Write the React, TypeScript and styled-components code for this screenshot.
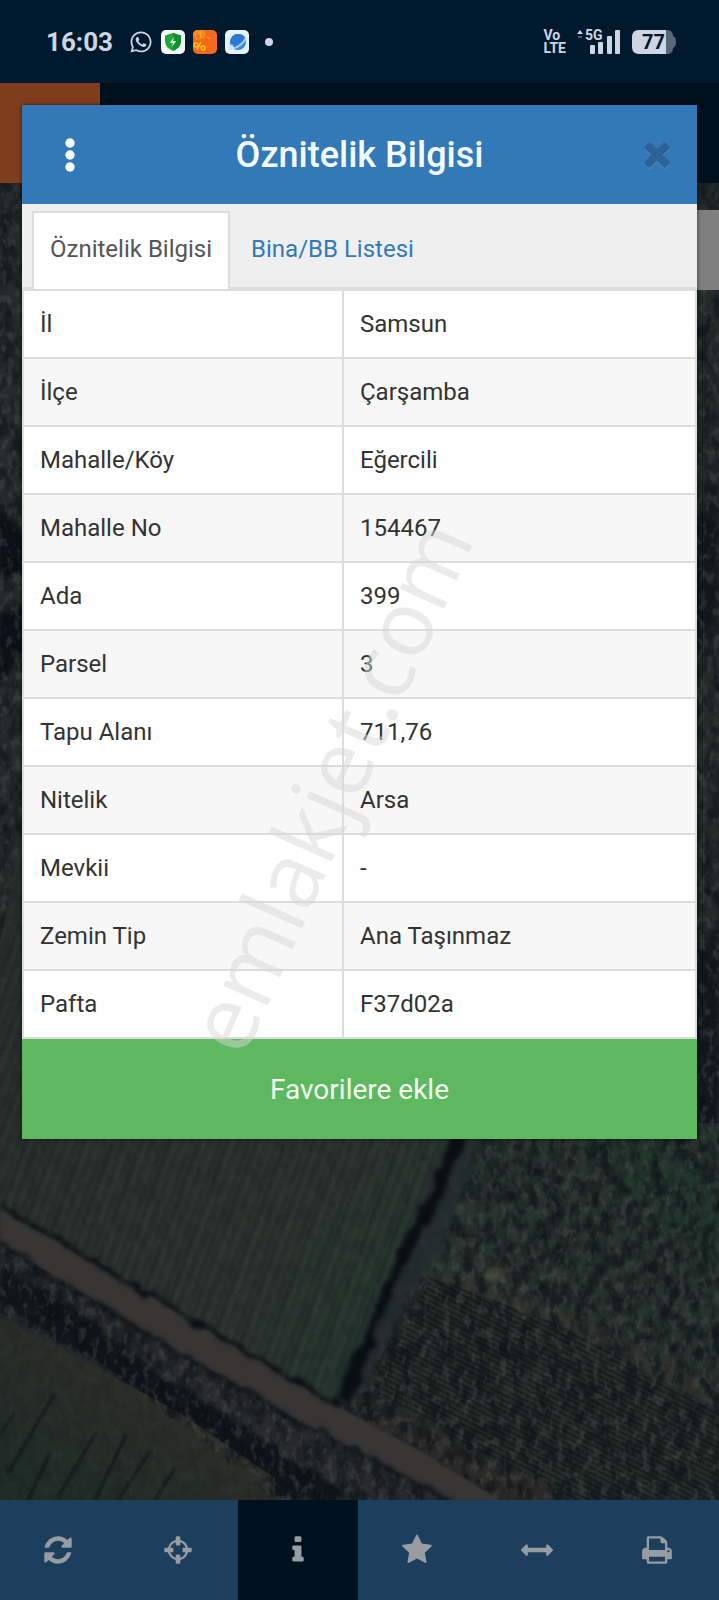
import React, { useState } from 'react';

import styled, { createGlobalStyle } from 'styled-components';
import { FaWhatsapp } from 'react-icons/fa';


const ROWS = [
  { label: 'İl', value: 'Samsun' },
  { label: 'İlçe', value: 'Çarşamba' },
  { label: 'Mahalle/Köy', value: 'Eğercili' },
  { label: 'Mahalle No', value: '154467' },
  { label: 'Ada', value: '399' },
  { label: 'Parsel', value: '3' },
  { label: 'Tapu Alanı', value: '711,76' },
  { label: 'Nitelik', value: 'Arsa' },
  { label: 'Mevkii', value: '-' },
  { label: 'Zemin Tip', value: 'Ana Taşınmaz' },
  { label: 'Pafta', value: 'F37d02a' },
];

const TABS = ['Öznitelik Bilgisi', 'Bina/BB Listesi'];

// glyphs are on a 1792 x 1792 box
const TOOLS = [
  {
    name: 'Yenile',
    path: 'M1639 1056q0 5-1 7-64 268-268 434.5t-478 166.5q-146 0-282.5-55t-243.5-157l-129 129q-19 19-45 19t-45-19-19-45v-448q0-26 19-45t45-19h448q26 0 45 19t19 45-19 45l-137 137q71 66 161 102t187 36q134 0 250-65t186-179q11-17 53-117 8-23 30-23h192q13 0 22.5 9.5t9.5 22.5zm25-800v448q0 26-19 45t-45 19h-448q-26 0-45-19t-19-45 19-45l138-138q-148-137-349-137-134 0-250 65t-186 179q-11 17-53 117-8 23-30 23h-199q-13 0-22.5-9.5t-9.5-22.5v-7q65-268 270-434.5t480-166.5q146 0 284 55.5t245 156.5l130-129q19-19 45-19t45 19 19 45z',
  },
  {
    name: 'Konum',
    path: 'M1325 1024h-109q-26 0-45-19t-19-45v-128q0-26 19-45t45-19h109q-32-108-112.5-188.5t-188.5-112.5v109q0 26-19 45t-45 19h-128q-26 0-45-19t-19-45v-109q-108 32-188.5 112.5t-112.5 188.5h109q26 0 45 19t19 45v128q0 26-19 45t-45 19h-109q32 108 112.5 188.5t188.5 112.5v-109q0-26 19-45t45-19h128q26 0 45 19t19 45v109q108-32 188.5-112.5t112.5-188.5zm339-192v128q0 26-19 45t-45 19h-143q-37 161-154.5 278.5t-278.5 154.5v143q0 26-19 45t-45 19h-128q-26 0-45-19t-19-45v-143q-161-37-278.5-154.5t-154.5-278.5h-143q-26 0-45-19t-19-45v-128q0-26 19-45t45-19h143q37-161 154.5-278.5t278.5-154.5v-143q0-26 19-45t45-19h128q26 0 45 19t19 45v143q161 37 278.5 154.5t154.5 278.5h143q26 0 45 19t19 45z',
  },
  {
    name: 'Bilgi',
    path: 'M1216 1344v128q0 26-19 45t-45 19h-512q-26 0-45-19t-19-45v-128q0-26 19-45t45-19h64v-384h-64q-26 0-45-19t-19-45v-128q0-26 19-45t45-19h384q26 0 45 19t19 45v576h64q26 0 45 19t19 45zm-128-1152v192q0 26-19 45t-45 19h-256q-26 0-45-19t-19-45v-192q0-26 19-45t45-19h256q26 0 45 19t19 45z',
  },
  {
    name: 'Favoriler',
    path: 'M1728 647q0 22-26 48l-363 354 86 500q1 7 1 20 0 21-10.5 35.5t-30.5 14.5q-19 0-40-12l-449-236-449 236q-22 12-40 12-21 0-31.5-14.5t-10.5-35.5q0-6 2-20l86-500-364-354q-25-27-25-48 0-37 56-46l502-73 225-455q19-41 49-41t49 41l225 455 502 73q56 9 56 46z',
  },
  {
    name: 'Ölçüm',
    path: 'M1792 896q0 26-19 45l-256 256q-19 19-45 19t-45-19-19-45v-128h-1024v128q0 26-19 45t-45 19-45-19l-256-256q-19-19-19-45t19-45l256-256q19-19 45-19t45 19 19 45v128h1024v-128q0-26 19-45t45-19 45 19l256 256q19 19 19 45z',
  },
  {
    name: 'Yazdır',
    path: 'M448 1536h896v-256h-896v256zm0-640h896v-384h-160q-40 0-68-28t-28-68v-160h-640v640zm1152 64q0-26-19-45t-45-19-45 19-19 45 19 45 45 19 45-19 19-45zm128 0v416q0 13-9.5 22.5t-22.5 9.5h-224v160q0 40-28 68t-68 28h-960q-40 0-68-28t-28-68v-160h-224q-13 0-22.5-9.5t-9.5-22.5v-416q0-79 56.5-135.5t135.5-56.5h64v-544q0-40 28-68t68-28h672q40 0 88 20t76 48l152 152q28 28 48 76t20 88v256h64q79 0 135.5 56.5t56.5 135.5z',
  },
];

const CLOSE_PATH = 'M1490 1322q0 40-28 68l-136 136q-28 28-68 28t-68-28l-294-294-294 294q-28 28-68 28t-68-28l-136-136q-28-28-28-68t28-68l294-294-294-294q-28-28-28-68t28-68l136-136q28-28 68-28t68 28l294 294 294-294q28-28 68-28t68 28l136 136q28 28 28 68t-28 68l-294 294 294 294q28 28 28 68z';

const ShieldIcon = () => (
  <svg width="24" height="24" viewBox="0 0 24 24">
    <rect width="24" height="24" rx="5" fill="#f3faf6" />
    <path d="M12 3 L20 5.500 V11 Q20 17.500 12 21 Q4 17.500 4 11 V5.500 Z" fill="#1fa83a" />
    <path d="M12 3 L20 5.500 V11 Q20 17.500 12 21 Z" fill="#149030" />
    <path d="M13 7 L9 13 H12 L11 17 L15 11 H12 Z" fill="#e9fff0" />
  </svg>
);

const PromoIcon = () => (
  <svg width="24" height="24" viewBox="0 0 24 24">
    <rect width="24" height="24" rx="5" fill="#f4691b" />
    <path d="M0 6 Q5 2 8 7 T13 4 L11 0 H5 Q0 0 0 5 Z" fill="#f98a1e" />
    <path d="M2 4 L4 10 M8 2 L7 9 M14 7 L17 9" stroke="#fbb53a" strokeWidth="1" />
    <g fill="none" stroke="#fbc21d" strokeWidth="1.500">
      <circle cx="3" cy="15" r="2" />
      <circle cx="10" cy="18" r="2" />
      <path d="M8 12 L4 20" />
    </g>
  </svg>
);

const BrowserIcon = () => (
  <svg width="24" height="24" viewBox="0 0 24 24">
    <rect width="24" height="24" rx="5" fill="#e6f2fb" />
    <circle cx="13" cy="12" r="8" fill="#3b88da" />
    <path d="M5 13 Q6 4 13 4 Q19 4 20 8 Q14 16 6 16 Z" fill="#2f78cf" />
    <path d="M7 18 Q15 16 20 8 L21 10 Q17 17 9 19 Z" fill="#a5d0f6" />
    <path d="M4 20 Q4 16 7 14 L10 19 Z" fill="#c6e3f9" />
  </svg>
);

const SignalIcon = () => (
  <svg width="46" height="36" viewBox="0 -5 46 36">
    <path d="M1 5 L4 1 L7 5 Z" fill="#cdd6e2" />
    <path d="M2 8 H6" stroke="#4a5a6c" strokeWidth="2" />
    <g fill="#cdd6e2">
      <rect x="14" y="16" width="5" height="9" rx="1" />
      <rect x="22" y="13" width="5" height="12" rx="1" />
      <rect x="31" y="7" width="5" height="18" rx="1" />
      <rect x="39" y="1" width="5" height="24" rx="1" />
    </g>
    <text x="9" y="11" fontFamily="Roboto, sans-serif" fontSize="14" fontWeight="700" fill="#cdd6e2">5G</text>
  </svg>
);

const BatteryIcon = () => (
  <svg width="44" height="24" viewBox="0 0 44 24">
    <path d="M34 0 H35 Q41 0 41 6 Q44 7 44 12 Q44 17 41 18 Q41 24 35 24 H34 Z" fill="#58677a" />
    <path d="M7 0 H34 V24 H7 Q0 24 0 17 V7 Q0 0 7 0 Z" fill="#cdd6e2" />
    <text x="10" y="19" fontFamily="Roboto, sans-serif" fontSize="20" fontWeight="700" fill="#04162a">77</text>
  </svg>
);

// darkened aerial photo of the fields
const Aerial = () => (
  <StyledAerial viewBox="0 0 719 1317" preserveAspectRatio="xMidYMax slice" aria-hidden="true">
    <defs>
      <pattern id="furrow" width="27" height="60" patternUnits="userSpaceOnUse" patternTransform="rotate(20)">
        <rect x="1" width="1" height="60" fill="#131c1a" opacity=".6" />
        <rect x="6" width="2" height="60" fill="#3a3f3a" opacity=".3" />
        <rect x="11" width="1" height="60" fill="#1a2422" opacity=".5" />
        <rect x="17" width="1" height="60" fill="#3a3f3a" opacity=".3" />
        <rect x="21" width="2" height="60" fill="#19221f" opacity=".4" />
      </pattern>
      <pattern id="rows" width="5" height="5" patternUnits="userSpaceOnUse" patternTransform="rotate(27)">
        <rect width="5" height="2" fill="#101719" opacity=".6" />
      </pattern>
      <pattern id="trees" width="22" height="24" patternUnits="userSpaceOnUse" patternTransform="rotate(28)">
        <ellipse cx="6" cy="6" rx="4" ry="6" fill="#0f1619" opacity=".6" />
        <ellipse cx="17" cy="17" rx="4" ry="6" fill="#121b1b" opacity=".6" />
        <ellipse cx="12" cy="5" rx="2" ry="4" fill="#3b453e" opacity=".5" />
      </pattern>
      <linearGradient id="field" x1="0" y1="0" x2="1" y2="1">
        <stop offset="0" stopColor="#272e2c" />
        <stop offset=".7" stopColor="#2c332f" />
        <stop offset="1" stopColor="#223a30" />
      </linearGradient>
      <linearGradient id="fallow" x1="0" y1="1" x2="1" y2="0">
        <stop offset="0" stopColor="#1d2c26" />
        <stop offset=".6" stopColor="#2c2d29" />
      </linearGradient>
      <filter id="grain" x="0" y="0" width="100%" height="100%" colorInterpolationFilters="sRGB">
        <feTurbulence type="fractalNoise" baseFrequency=".08 .05" numOctaves="4" seed="7" />
        <feColorMatrix values="0 0 0 0 .05  0 0 0 0 .07  0 0 0 0 .09  3 0 0 0 -1.200" />
      </filter>
      <filter id="light" x="0" y="0" width="100%" height="100%" colorInterpolationFilters="sRGB">
        <feTurbulence type="fractalNoise" baseFrequency=".14 .09" numOctaves="3" seed="21" />
        <feColorMatrix values="0 0 0 0 .3  0 0 0 0 .32  0 0 0 0 .32  0 4 0 0 -2" />
      </filter>
      <filter id="rough" x="-10%" y="-10%" width="120%" height="120%" colorInterpolationFilters="sRGB">
        <feTurbulence type="fractalNoise" baseFrequency=".06" numOctaves="3" seed="3" result="noise" />
        <feDisplacementMap in="SourceGraphic" in2="noise" scale="14" xChannelSelector="R" yChannelSelector="G" />
        <feGaussianBlur stdDeviation="2" />
      </filter>
      <filter id="soft">
        <feGaussianBlur stdDeviation="1" />
      </filter>
      <clipPath id="wild">
        <path d="M0 0 H24 V640 L0 760 Z M690 0 H719 V1317 H500 L342 1224 L404 1070 L455 950 H690 Z M0 1060 L138 1144 L284 1230 L450 1317 H275 L115 1190 L0 1130 Z" />
      </clipPath>
    </defs>

    <rect width="719" height="1317" fill="#232a28" />
    <path d="M0 0 H30 V640 L0 700 Z" fill="#252a2a" />
    <path d="M0 700 L40 600 H450 V957 L404 1070 L339 1224 L110 1087 L0 1025 Z" fill="url(#field)" />
    <path d="M0 700 L40 600 H450 V957 L404 1070 L339 1224 L110 1087 L0 1025 Z" fill="url(#furrow)" filter="url(#soft)" />
    <path d="M0 320 L20 350 L40 330 V400 L0 390 Z M0 430 L40 420 V450 L0 500 Z" fill="#0b1118" filter="url(#rough)" />
    <path d="M690 340 L719 310 V430 L690 470 Z M690 780 L719 740 V960 H690 Z" fill="#0d141c" opacity=".7" filter="url(#rough)" />

    {/* orchard */}
    <path d="M460 940 H719 V1224 L431 1094 L400 1080 Z" fill="#29332e" />
    <path d="M470 940 H719 V1224 L480 1080 Z" fill="url(#trees)" filter="url(#rough)" />
    <path d="M560 940 L719 1090 V1000 L640 940 Z" fill="#1c3c2c" opacity=".35" filter="url(#rough)" />
    <path d="M430 1090 Q520 1100 719 1205 V1222 Q540 1120 430 1100 Z" fill="#373330" opacity=".7" filter="url(#rough)" />
    <ellipse cx="497" cy="1090" rx="13" ry="9" fill="#555443" opacity=".6" filter="url(#rough)" />

    {/* ploughed plot */}
    <path d="M431 1094 L560 1142 L719 1230 V1317 H500 L358 1220 Z" fill="#252b27" />
    <path d="M431 1094 L560 1142 L719 1230 V1317 H560 L370 1205 Z" fill="url(#rows)" />
    <path d="M360 1215 L440 1250 L580 1317 H500 L345 1230 Z" fill="#2b2927" filter="url(#rough)" />

    {/* verge and lower plots */}
    <path d="M0 1055 L138 1140 L284 1225 L455 1317 H275 L115 1180 L0 1130 Z" fill="#262a2c" />
    <path d="M0 1085 L70 1122 L160 1190 L250 1248 L330 1300 L350 1317 H280 L240 1276 L100 1182 L0 1120 Z" fill="#0c1119" opacity=".8" filter="url(#rough)" />
    <path d="M0 1134 L80 1176 L180 1230 L275 1295 V1317 H0 Z" fill="url(#fallow)" />
    <path
      d="M54 1212 L8 1290 M50 1270 L28 1317 M96 1250 L56 1317 M126 1252 L95 1317 M150 1268 L118 1317 M175 1285 L155 1317 M14 1230 L0 1252"
      stroke="#0e1715"
      strokeWidth="2"
      filter="url(#soft)"
    />

    <g clipPath="url(#wild)">
      <rect width="719" height="1317" filter="url(#grain)" opacity=".6" />
      <rect width="719" height="1317" filter="url(#light)" opacity=".35" />
    </g>
    <rect width="719" height="1317" filter="url(#grain)" opacity=".15" />
    <rect width="719" height="1317" filter="url(#light)" opacity=".1" />

    {/* hedge */}
    <path d="M446 950 L482 950 L462 1010 L440 1070 L405 1120 L372 1190 L352 1222 L332 1218 L370 1130 L404 1060 Z" fill="#232c2f" opacity=".8" filter="url(#rough)" />
    <path d="M452 950 L468 950 L430 1040 L400 1090 L376 1150 L350 1222 L334 1215 L375 1130 L400 1060 L432 1010 Z" fill="#0a0e14" filter="url(#rough)" />

    {/* road */}
    <path d="M0 1026 L110 1088 L339 1225 L420 1268 L500 1317 H450 L284 1230 L138 1144 L0 1059 Z" fill="#393636" filter="url(#soft)" />
    <path d="M0 1023 L110 1088 L225 1156 L339 1222" fill="none" stroke="#0b0e12" strokeWidth="4" filter="url(#rough)" />
    <path d="M0 1062 L138 1145 L284 1231 L450 1318" fill="none" stroke="#101317" strokeWidth="4" filter="url(#rough)" />
  </StyledAerial>
);

const App = () => {
  const [tab, setTab] = useState(0);
  const [tool, setTool] = useState(2);

  return (
    <>
      <GlobalStyle />
      <StyledScreen>
        <StyledStatusBar>
          <StyledGroup gap={8}>
            <StyledClock>16:03</StyledClock>
            <FaWhatsapp size={24} />
            <ShieldIcon />
            <PromoIcon />
            <BrowserIcon />
            <StyledDot />
          </StyledGroup>
          <StyledGroup gap={10}>
            <StyledVolte>Vo<br />LTE</StyledVolte>
            <SignalIcon />
            <BatteryIcon />
          </StyledGroup>
        </StyledStatusBar>

        <StyledStage>
          <StyledBackdrop>
            <StyledAppBar>
              <div />
            </StyledAppBar>
            <StyledMap>
              <Aerial />
              <StyledMapBox />
            </StyledMap>
            <StyledToolbar>
              {TOOLS.map(({ name, path }, i) => (
                <StyledTool key={name} type="button" aria-label={name} active={i === tool} onClick={() => setTool(i)}>
                  <svg width="32" height="32" viewBox="0 0 1792 1792" fill="currentColor">
                    <path d={path} />
                  </svg>
                </StyledTool>
              ))}
            </StyledToolbar>
          </StyledBackdrop>

          <StyledDialog role="dialog" aria-labelledby="dialog-title">
            <StyledHeader>
              <StyledIconButton type="button" aria-label="Menü">
                <svg width="10" height="34" viewBox="0 0 10 34" fill="#f4fbff">
                  <circle cx="5" cy="5" r="4.700" />
                  <circle cx="5" cy="17" r="4.700" />
                  <circle cx="5" cy="29" r="4.700" />
                </svg>
              </StyledIconButton>
              <h1 id="dialog-title">Öznitelik Bilgisi</h1>
              <StyledIconButton type="button" aria-label="Kapat">
                <svg width="38" height="38" viewBox="0 60 1792 1792">
                  <path d={CLOSE_PATH} fill="#4f8bc0" transform="translate(0 50)" />
                  <path d={CLOSE_PATH} fill="#2d6394" />
                </svg>
              </StyledIconButton>
            </StyledHeader>
            <StyledTabs role="tablist">
              {TABS.map((text, i) => (
                <StyledTab key={text} type="button" role="tab" aria-selected={i === tab} active={i === tab} onClick={() => setTab(i)}>
                  {text}
                </StyledTab>
              ))}
            </StyledTabs>
            <StyledTable>
              <tbody>
                {ROWS.map(({ label, value }) => (
                  <tr key={label}>
                    <th scope="row">{label}</th>
                    <td>{value}</td>
                  </tr>
                ))}
              </tbody>
            </StyledTable>
            <StyledFavorite type="button">Favorilere ekle</StyledFavorite>
          </StyledDialog>
        </StyledStage>
        <StyledWatermark>emlakjet.com</StyledWatermark>
      </StyledScreen>
    </>
  );
};

export default App;

const GlobalStyle = createGlobalStyle`
  * {
    box-sizing: border-box;
  }
  body {
    margin: 0;
    font-family: Roboto, sans-serif;
    background: #00101c;
  }
  button {
    font-family: inherit;
    border: none;
    padding: 0;
    cursor: pointer;
  }
  svg {
    display: block;
  }
`;

const StyledScreen = styled.div`
  position: relative;
  min-height: 100vh;
  display: flex;
  flex-direction: column;
  overflow: hidden;
`;

const StyledStatusBar = styled.header`
  height: 83px;
  padding: 0 43px 0 46px;
  display: flex;
  justify-content: space-between;
  align-items: center;
  color: #cdd6e2;
  background: #01192d;
`;

const StyledGroup = styled.div.withConfig({ shouldForwardProp: p => p !== 'gap' })<{ gap: number }>`
  display: flex;
  align-items: center;
  gap: ${({ gap }) => gap}px;
`;

const StyledClock = styled.span`
  margin-right: 8px;
  font-size: 26px;
  line-height: 28px;
  font-weight: 700;
`;

const StyledDot = styled.i`
  width: 8px;
  height: 8px;
  margin-left: 8px;
  border-radius: 50%;
  background: #cdd6e2;
`;

const StyledVolte = styled.span`
  font-size: 14px;
  line-height: 13px;
  font-weight: 700;
`;

/* backdrop and dialog share one cell */
const StyledStage = styled.div`
  flex: 1;
  display: grid;
  grid-template-columns: minmax(0, 1fr);

  > * {
    grid-area: 1 / 1;
  }
`;

const StyledBackdrop = styled.div`
  display: flex;
  flex-direction: column;
`;

const StyledAppBar = styled.div`
  height: 100px;
  background: #00101c;

  > div {
    width: 100px;
    height: 100%;
    background: #803d1d;
  }
`;

const StyledMap = styled.div`
  position: relative;
  flex: 1;
`;

const StyledAerial = styled.svg`
  position: absolute;
  inset: 0;
  width: 100%;
  height: 100%;
`;

const StyledMapBox = styled.div`
  position: absolute;
  top: 27px;
  right: 0;
  width: 80px;
  height: 80px;
  background: #7f7f7f;
`;

const StyledToolbar = styled.nav`
  height: 100px;
  margin-left: -2px;
  padding-right: 2px;
  display: grid;
  grid-template-columns: repeat(6, 1fr);
  background: #1c3f5d;
`;

const StyledTool = styled.button.withConfig({ shouldForwardProp: p => p !== 'active' })<{ active: boolean }>`
  display: flex;
  justify-content: center;
  align-items: center;
  color: #979ca3;
  background: ${({ active }) => (active ? '#00101c' : 'transparent')};
`;

const StyledDialog = styled.section`
  align-self: start;
  margin: 22px 22px 120px;
  position: relative;
  box-shadow: 0 0 4px rgba(0, 0, 0, .6);
`;

const StyledHeader = styled.div`
  height: 99px;
  padding: 0 12px 0 20px;
  display: grid;
  grid-template-columns: 56px 1fr 56px;
  align-items: center;
  background: #3379b7;

  h1 {
    margin: 0;
    padding-right: 8px;
    font-size: 36px;
    font-weight: 500;
    text-align: center;
    color: #f4fbff;
  }
`;

const StyledIconButton = styled.button`
  height: 56px;
  display: flex;
  justify-content: center;
  align-items: center;
  background: none;
`;

const StyledTabs = styled.div`
  height: 85px;
  padding: 7px 10px 0;
  display: flex;
  background: #efefef;
  border-bottom: 2px solid #ddd;
`;

const StyledTab = styled.button.withConfig({ shouldForwardProp: p => p !== 'active' })<{ active: boolean }>`
  height: 78px;
  padding: 0 16px 4px;
  font-size: 24px;
  color: ${({ active }) => (active ? '#555' : '#337ab7')};
  background: ${({ active }) => (active ? '#fff' : 'transparent')};
  border: 2px solid ${({ active }) => (active ? '#ddd' : 'transparent')};
  border-bottom: none;
  margin-right: 3px;
`;

const StyledTable = styled.table`
  width: 100%;
  border-collapse: collapse;
  table-layout: fixed;
  background: #fff;

  tr {
    height: 68px;
  }
  tr:nth-child(even) {
    background: #f7f7f7;
  }
  th, td {
    padding: 0 16px;
    font-size: 24px;
    font-weight: 400;
    text-align: left;
    color: #333;
    border: 2px solid #ddd;
  }
  th {
    width: 320px;
  }
`;

const StyledFavorite = styled.button`
  width: 100%;
  height: 100px;
  font-size: 28px;
  color: #f2fff2;
  background: #5eb85f;
`;

const StyledWatermark = styled.div`
  position: absolute;
  top: 785px;
  left: 328px;
  font-family: 'Open Sans', sans-serif;
  font-size: 91px;
  line-height: 1;
  white-space: nowrap;
  color: rgba(215, 215, 215, .5);
  transform: translate(-50%, -50%) rotate(-66deg);
  pointer-events: none;
`;
